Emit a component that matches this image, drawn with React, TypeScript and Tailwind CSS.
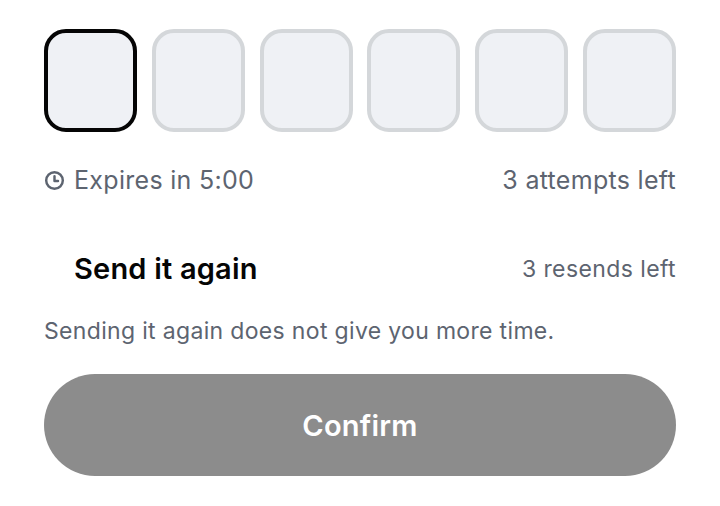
export default function App() {
  return (
    <div className="w-[720px] h-[506px] bg-white px-11 pt-[29px] font-['Inter',sans-serif]">
      <div className="flex justify-between">
        {[0, 1, 2, 3, 4, 5].map((i) => (
          <div key={i} className={`w-[93px] h-[103px] rounded-[22px] border-4 bg-[#eff1f5] ${i === 0 ? "border-[#050505]" : "border-[#d4d7da]"}`} />
        ))}
      </div>
      <div className="flex items-center justify-between mt-[33px] h-[32px] text-[25px] tracking-[0.3px] text-[#5d6470]">
        <div className="flex items-center gap-[9px]">
          <svg className="-translate-y-px" width="21" height="21" viewBox="0 0 24 24" fill="none" stroke="currentColor" strokeWidth="2.8" strokeLinecap="round" strokeLinejoin="round">
            <circle cx="12" cy="12" r="9.5" />
            <path d="M12 7v5.5h4" />
          </svg>
          <span>Expires in 5:00</span>
        </div>
        <span>3 attempts left</span>
      </div>
      <div className="flex items-center justify-between mt-[54px] h-[36px]">
        <span className="ml-[30px] text-[29px] tracking-[0.2px] font-semibold text-[#050505]">Send it again</span>
        <span className="text-[23px] tracking-[0.4px] text-[#5d6470]">3 resends left</span>
      </div>
      <p className="mt-[28px] h-[32px] text-[23px] leading-[32px] tracking-[0.33px] text-[#5d6470]">Sending it again does not give you more time.</p>
      <button className="mt-[27px] flex h-[102px] w-full items-center justify-center rounded-full bg-[#8c8c8c] pt-[2px] text-[29px] font-semibold tracking-[0.25px] text-white">Confirm</button>
    </div>
  );
}
